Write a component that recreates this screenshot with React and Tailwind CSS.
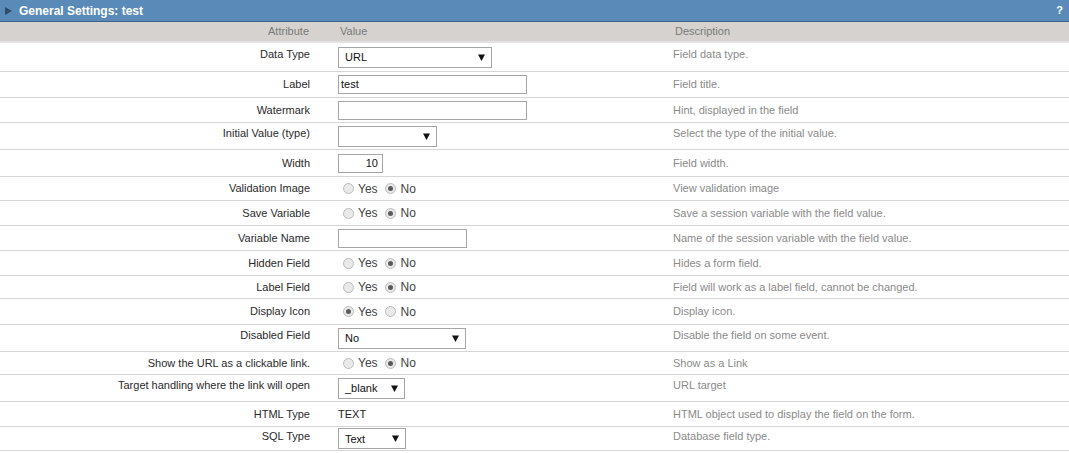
import React from "react";

const F = { fontFamily: '"Liberation Sans", Arial, sans-serif' };

function Arrow() {
  return (
    <svg width="7" height="7" viewBox="0 0 7 7" className="shrink-0">
      <path d="M0 0.5 H7 L3.5 7 Z" fill="#111" />
    </svg>
  );
}

function Select({ w, text }) {
  return (
    <div
      className="flex h-[21px] items-center justify-between border border-[#a5a5a5] bg-white pl-[6px] pr-[6px] text-[11px] text-[#111]"
      style={{ width: w }}
    >
      <span className="pt-[1px]">{text}</span>
      <Arrow />
    </div>
  );
}

function Input({ w, text, right }) {
  return (
    <div
      className={`flex h-[19px] items-center border border-[#a5a5a5] bg-white px-[2px] text-[11px] text-[#111] ${right ? "justify-end pr-[4px]" : ""}`}
      style={{ width: w }}
    >
      {text}
    </div>
  );
}

function Radio({ checked }) {
  return (
    <span className="flex h-[11px] w-[11px] items-center justify-center rounded-full border border-[#bcbcbc] bg-[#e9e9e9]">
      {checked && <span className="h-[5px] w-[5px] rounded-full bg-[#5a5a5a]" />}
    </span>
  );
}

function YesNo({ yes }) {
  return (
    <div className="flex items-center pl-[5px] text-[12px] text-[#444]">
      <Radio checked={yes} />
      <span className="ml-[4px]">Yes</span>
      <span className="ml-[7px]">
        <Radio checked={!yes} />
      </span>
      <span className="ml-[5px]">No</span>
    </div>
  );
}

const rows = [
  { a: "Data Type", h: 29, sel: true, v: <Select w={154} text="URL" />, d: "Field data type." },
  { a: "Label", h: 26, v: <Input w={189} text="test" />, d: "Field title." },
  { a: "Watermark", h: 25, v: <Input w={189} text="" />, d: "Hint, displayed in the field" },
  { a: "Initial Value (type)", h: 27, sel: true, v: <Select w={99} text="" />, d: "Select the type of the initial value." },
  { a: "Width", h: 27, v: <Input w={45} text="10" right />, d: "Field width." },
  { a: "Validation Image", h: 24, v: <YesNo yes={false} />, d: "View validation image" },
  { a: "Save Variable", h: 25, v: <YesNo yes={false} />, d: "Save a session variable with the field value." },
  { a: "Variable Name", h: 25, v: <Input w={129} text="" />, d: "Name of the session variable with the field value." },
  { a: "Hidden Field", h: 25, v: <YesNo yes={false} />, d: "Hides a form field." },
  { a: "Label Field", h: 23, v: <YesNo yes={false} />, d: "Field will work as a label field, cannot be changed." },
  { a: "Display Icon", h: 26, v: <YesNo yes={true} />, d: "Display icon." },
  { a: "Disabled Field", h: 27, sel: true, v: <Select w={128} text="No" />, d: "Disable the field on some event." },
  { a: "Show the URL as a clickable link.", h: 23, v: <YesNo yes={false} />, d: "Show as a Link" },
  { a: "Target handling where the link will open", h: 27, sel: true, v: <Select w={67} text="_blank" />, d: "URL target" },
  { a: "HTML Type", h: 25, v: <span className="text-[11px] text-[#222]">TEXT</span>, d: "HTML object used to display the field on the form." },
  { a: "SQL Type", h: 24, sel: true, v: <Select w={68} text="Text" />, d: "Database field type." },
];

export default function App() {
  return (
    <div className="h-[453px] w-[1069px] overflow-hidden bg-white" style={F}>
      <div className="flex h-[22px] items-center border-b border-[#3f6286] bg-[#5a8bb8] pl-[5px] pr-[6px]">
        <svg width="7" height="8" viewBox="0 0 7 8" className="mr-[7px]">
          <path d="M0 0 L7 4 L0 8 Z" fill="#2f4c69" />
        </svg>
        <span className="text-[12px] font-bold text-white">General Settings: test</span>
        <span className="ml-auto text-[11px] font-bold text-white">?</span>
      </div>
      <div className="grid h-[21px] grid-cols-[324px_335px_1fr] items-center border-b-2 border-[#e2e2e2] bg-[#d5d2cf] text-[11px] text-[#7a7a7a]">
        <div className="pr-[15px] text-right">Attribute</div>
        <div className="pl-[16px]">Value</div>
        <div className="pl-[16px]">Description</div>
      </div>
      {rows.map((r) => (
        <div
          key={r.a}
          className="grid grid-cols-[324px_335px_1fr] items-center border-b border-[#d6d6d6]"
          style={{ height: r.h }}
        >
          <div className={`pr-[14px] text-right text-[11px] text-[#2a2a2a] ${r.sel ? "pb-[5px]" : ""}`}>{r.a}</div>
          <div className="flex items-center pl-[14px]">{r.v}</div>
          <div className={`pl-[14px] text-[11px] text-[#8a8a8a] ${r.sel ? "pb-[5px]" : ""}`}>{r.d}</div>
        </div>
      ))}
    </div>
  );
}
